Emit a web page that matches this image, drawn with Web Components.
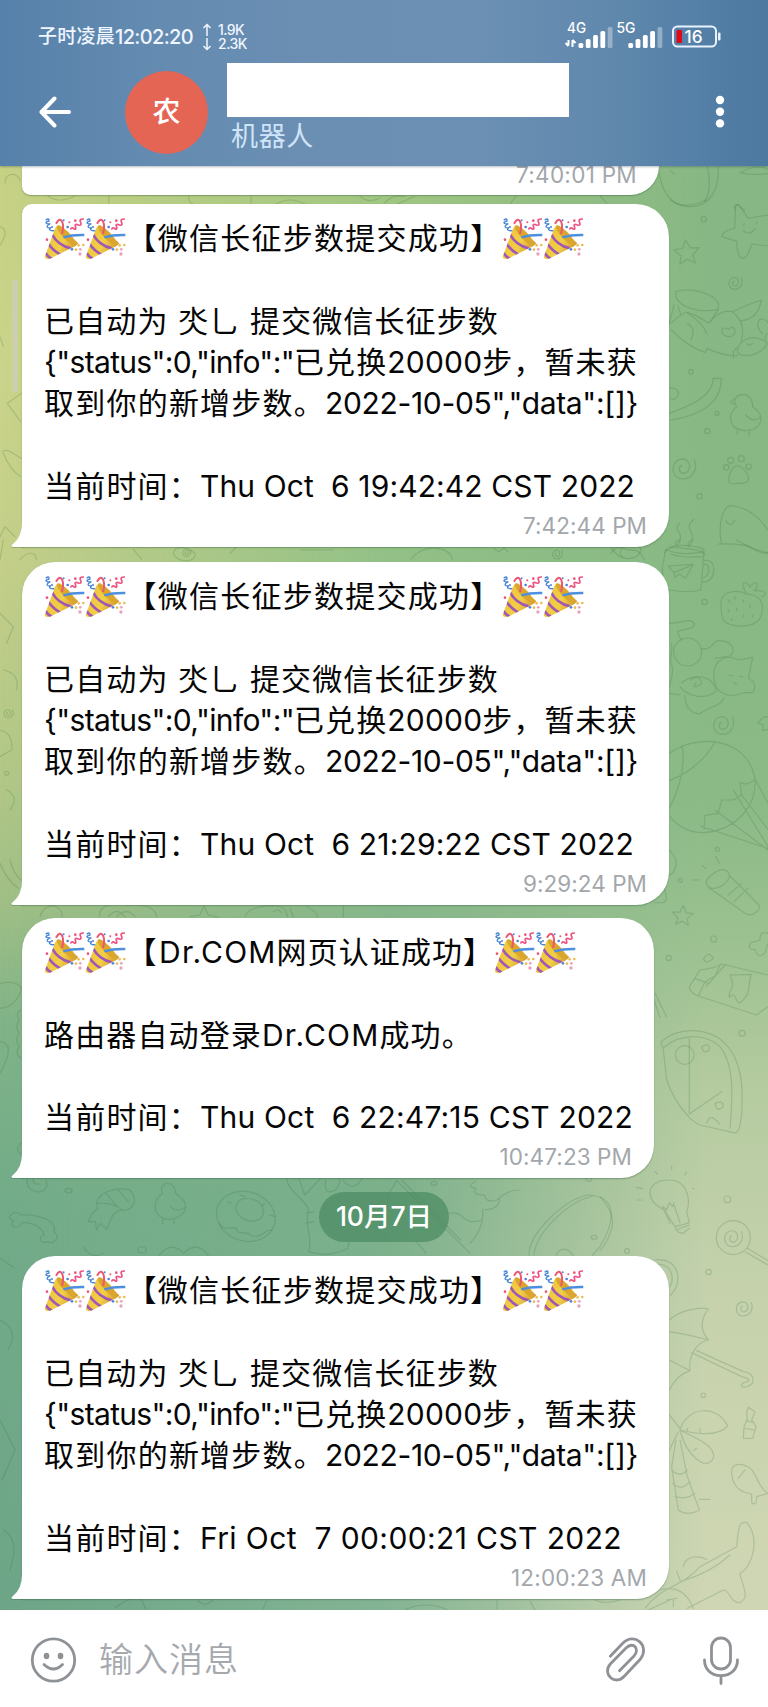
<!DOCTYPE html>
<html lang="zh-CN">
<head>
<meta charset="utf-8">
<title>机器人</title>
<style>
html,body{margin:0;padding:0}
body{width:768px;height:1707px;overflow:hidden;font-family:Inter,"Noto Sans CJK SC",sans-serif;color:#060606}
</style>
</head>
<body>
<chat-screen>
  <chat-header slot="header" initial="农" subtitle="机器人"></chat-header>
  <chat-bubble class="first" w="637" h="29" kind="cut" time="7:40:01 PM" tw="121"></chat-bubble>
  <chat-bubble w="647" h="343" kind="grouped" time="7:42:44 PM" tw="124">
    <chat-line><party-popper></party-popper><party-popper></party-popper><text-run w="375">【微信长征步数提交成功】</text-run><party-popper></party-popper><party-popper></party-popper></chat-line>
    <chat-line></chat-line>
    <chat-line><text-run w="124.6">已自动为</text-run><text-run w="9.6"> </text-run><text-run w="62.2">氼乚</text-run><text-run w="9.6"> </text-run><text-run w="249">提交微信长征步数</text-run></chat-line>
    <chat-line><text-run w="250">{"status":0,"info":"</text-run><text-run w="93.3">已兑换</text-run><text-run w="95">20000</text-run><text-run w="155.5">步，暂未获</text-run></chat-line>
    <chat-line><text-run w="281">取到你的新增步数。</text-run><text-run w="313">2022-10-05","data":[]}</text-run></chat-line>
    <chat-line></chat-line>
    <chat-line><text-run w="156">当前时间：</text-run><text-run w="435">Thu Oct  6 19:42:42 CST 2022</text-run></chat-line>
  </chat-bubble>
  <chat-bubble w="647" h="343" gap="15" time="9:29:24 PM" tw="124">
    <chat-line><party-popper></party-popper><party-popper></party-popper><text-run w="375">【微信长征步数提交成功】</text-run><party-popper></party-popper><party-popper></party-popper></chat-line>
    <chat-line></chat-line>
    <chat-line><text-run w="124.6">已自动为</text-run><text-run w="9.6"> </text-run><text-run w="62.2">氼乚</text-run><text-run w="9.6"> </text-run><text-run w="249">提交微信长征步数</text-run></chat-line>
    <chat-line><text-run w="250">{"status":0,"info":"</text-run><text-run w="93.3">已兑换</text-run><text-run w="95">20000</text-run><text-run w="155.5">步，暂未获</text-run></chat-line>
    <chat-line><text-run w="281">取到你的新增步数。</text-run><text-run w="313">2022-10-05","data":[]}</text-run></chat-line>
    <chat-line></chat-line>
    <chat-line><text-run w="156">当前时间：</text-run><text-run w="434">Thu Oct  6 21:29:22 CST 2022</text-run></chat-line>
  </chat-bubble>
  <chat-bubble w="632" h="260" gap="13" time="10:47:23 PM" tw="132.500">
    <chat-line><party-popper></party-popper><party-popper></party-popper><text-run w="32.5">【</text-run><text-run w="117.5">Dr.COM</text-run><text-run w="217.5">网页认证成功】</text-run><party-popper></party-popper><party-popper></party-popper></chat-line>
    <chat-line></chat-line>
    <chat-line><text-run w="218">路由器自动登录</text-run><text-run w="117.5">Dr.COM</text-run><text-run w="93.3">成功。</text-run></chat-line>
    <chat-line></chat-line>
    <chat-line><text-run w="156">当前时间：</text-run><text-run w="433">Thu Oct  6 22:47:15 CST 2022</text-run></chat-line>
  </chat-bubble>
  <date-pill>10月7日</date-pill>
  <chat-bubble w="647" h="343" gap="14" time="12:00:23 AM" tw="136">
    <chat-line><party-popper></party-popper><party-popper></party-popper><text-run w="375">【微信长征步数提交成功】</text-run><party-popper></party-popper><party-popper></party-popper></chat-line>
    <chat-line></chat-line>
    <chat-line><text-run w="124.6">已自动为</text-run><text-run w="9.6"> </text-run><text-run w="62.2">氼乚</text-run><text-run w="9.6"> </text-run><text-run w="249">提交微信长征步数</text-run></chat-line>
    <chat-line><text-run w="250">{"status":0,"info":"</text-run><text-run w="93.3">已兑换</text-run><text-run w="95">20000</text-run><text-run w="155.5">步，暂未获</text-run></chat-line>
    <chat-line><text-run w="281">取到你的新增步数。</text-run><text-run w="313">2022-10-05","data":[]}</text-run></chat-line>
    <chat-line></chat-line>
    <chat-line><text-run w="156">当前时间：</text-run><text-run w="422">Fri Oct  7 00:00:21 CST 2022</text-run></chat-line>
  </chat-bubble>
  <message-input slot="footer" placeholder="输入消息"></message-input>
</chat-screen>

<script>
const shadow = (el, html) => { el.attachShadow({mode:'open'}).innerHTML = html; return el.shadowRoot; };

customElements.define('chat-line', class extends HTMLElement {
  connectedCallback(){
    if (this.shadowRoot) return;
    shadow(this, `<style>:host{display:flex;align-items:center;height:41.3px;line-height:41.3px;font-size:30px;white-space:pre}</style><slot></slot>`);
  }
});

customElements.define('party-popper', class extends HTMLElement {
  connectedCallback(){
    if (this.shadowRoot) return;
    shadow(this, `<style>:host{display:block;white-space:normal;width:41.3px;height:42px;flex:none}svg{display:block}</style>
    <svg width="41.3" height="42" viewBox="0 0 124 126">
      <defs><linearGradient id="g" x1="0" y1="0.3" x2="1" y2="0.8"><stop offset="0" stop-color="#efc23a"/><stop offset=".5" stop-color="#f2cf45"/><stop offset="1" stop-color="#c98d2c"/></linearGradient>
      <clipPath id="c"><path d="M2 117 33 32Q40 14 62 38 88 60 103 76 98 84 78 92L18 122Q4 126 2 117Z"/></clipPath></defs>
      <path d="M2 117 33 32Q40 14 62 38 88 60 103 76 98 84 78 92L18 122Q4 126 2 117Z" fill="url(#g)"/>
      <ellipse cx="67" cy="52" rx="11" ry="40" transform="rotate(-43 67 52)" fill="#dba62d"/>
      <g clip-path="url(#c)" fill="none" stroke="#a057b8" stroke-width="8"><path d="M24 49Q42 82 80 91"/><path d="M12 76Q27 98 49 110"/><path d="M5 104Q10 116 24 122"/></g>
      <path d="M58 58Q85 50 121 51" fill="none" stroke="#4b8fe0" stroke-width="7"/>
      <path d="M36 17Q48-4 55 12 60 27 54 48" fill="none" stroke="#ed5870" stroke-width="6"/>
      <path d="M5 7Q16-2 15 9C-3 14 10 19 19 17 1 26 12 31 21 29 11 34 20 39 31 38" fill="none" stroke="#4686d5" stroke-width="4"/>
      <path d="M80 35Q82 25 91 33 98 36 94 24 91 16 104 21 115 24 109 11 106 2 120 3" fill="none" stroke="#ee5384" stroke-width="5"/>
      <g fill="#4d83db"><circle cx="59" cy="7" r="3"/><circle cx="71" cy="27" r="4"/><circle cx="24" cy="27" r="3"/><circle cx="84" cy="94" r="4"/></g>
      <g fill="#ed5578"><circle cx="94" cy="8" r="4"/><circle cx="76" cy="13" r="3"/><circle cx="9" cy="65" r="4"/></g>
      <g fill="#eebd52"><circle cx="104" cy="82" r="4"/><circle cx="118" cy="81" r="4"/><circle cx="96" cy="95" r="4"/></g>
      <g fill="#e9a1bd"><circle cx="109" cy="94" r="4"/><circle cx="108" cy="108" r="5"/></g>
    </svg>`);
  }
});

customElements.define('chat-bubble', class extends HTMLElement {
  connectedCallback(){
    if (this.shadowRoot) return;
    const w = this.getAttribute('w'), h = this.getAttribute('h'), kind = this.getAttribute('kind') || '';
    const gap = this.getAttribute('gap') || (kind === 'grouped' ? 9 : 0);
    const cut = kind === 'cut';
    const radius = cut ? '0 0 31px 9px' : (kind === 'grouped' ? '10px' : '33px') + ' 33px 33px 0';
    shadow(this, `<style>
      :host{display:flex;flex-direction:column;position:relative;box-sizing:border-box;width:${w}px;height:${h}px;margin:${gap}px 0 0 22px;
        padding:${cut ? '0' : '14px'} 22px 0;background:#fff;border-radius:${radius};box-shadow:0 1px 1.5px rgba(50,90,60,.42)}
      .tail{position:absolute;left:-11px;bottom:0;display:block;filter:drop-shadow(0 1px 0 rgba(50,90,60,.3));${cut ? 'display:none' : ''}}
      time{align-self:flex-end;white-space:pre;font-size:22.5px;line-height:24px;color:#a3a7ab;margin:${cut ? '-3px 0 0 0' : '6.5px 0 0'}}
    </style>
    <svg class="tail" width="12" height="36"><path d="M11 0H12V36H2Q-1 35 2 33 11 26 11 11Z" fill="#fff"/></svg>
    <slot></slot><time><text-run w="${this.getAttribute('tw')}">${this.getAttribute('time')}</text-run></time>`);
  }
});

customElements.define('date-pill', class extends HTMLElement {
  connectedCallback(){
    if (this.shadowRoot) return;
    shadow(this, `<style>:host{display:flex;align-items:center;justify-content:center;align-self:center;box-sizing:border-box;width:130px;height:50px;padding-bottom:2px;margin-top:14px;border-radius:25px;
      background:rgba(75,139,98,.72);color:#fff;font-size:26.5px;line-height:40px;font-weight:500;white-space:pre}</style><span><slot></slot></span>`);
  }
});

customElements.define('status-bar', class extends HTMLElement {
  connectedCallback(){
    if (this.shadowRoot) return;
    const bars = x => [5,9,13,17,21].map((b,i)=>`<rect x="${x+i*7.3}" y="${22-b}" width="4.8" height="${b}" rx="1.6" fill="#fff" opacity="${i===4?.35:1}"/>`).join('');
    shadow(this, `<style>
      :host{display:flex;align-items:center;height:74px;box-sizing:border-box;padding:0 45px 0 38px;color:#eff6ff;font-weight:500}
      .clock{font-size:19px;line-height:24px;display:flex;font-weight:500}
      .arrows{margin:0 6px 0 9px}
      .net{display:flex;flex-direction:column;font-size:14px;line-height:14px}
      .icons{margin-left:auto}
      svg{display:block}
      text{font-family:Inter,sans-serif}
    </style>
    <span class="clock"><text-run w="77">子时凌晨</text-run><text-run w="78" style="font-size:20px">12:02:20</text-run></span>
    <svg class="arrows" width="10" height="28" viewBox="0 0 10 28" fill="none" stroke="#eff6ff" stroke-width="1.5"><path d="M5 13V2M1.500 5 5 1.500 8.500 5M5 15V26M1.500 23 5 26.500 8.500 23"/></svg>
    <span class="net"><text-run w="26">1.9K</text-run><text-run w="29">2.3K</text-run></span>
    <svg class="icons" width="158" height="30" viewBox="0 0 158 30" overflow="visible">
      <text x="2" y="11" font-size="14" textLength="19" lengthAdjust="spacingAndGlyphs" fill="#fff">4G</text>
      <path d="M3.500 18V23.500M.5 21 3.500 24M7.500 25V18M10.500 21 7.500 18" stroke="#fff" stroke-width="2" fill="none"/>
      <g transform="translate(0 4)">${bars(13.500)}</g>
      <text x="51.500" y="11" font-size="14" textLength="19" lengthAdjust="spacingAndGlyphs" fill="#fff">5G</text>
      <g transform="translate(0 4)">${bars(63.300)}</g>
      <rect x="108" y="4.500" width="43" height="20" rx="4.500" fill="none" stroke="#e9f3ff" stroke-width="2"/>
      <rect x="153" y="10.500" width="2.500" height="8" rx="1" fill="#e9f3ff"/>
      <rect x="111.500" y="8" width="5.500" height="13" rx="1" fill="#de0917"/>
      <text x="119.500" y="20.500" font-size="17" textLength="18" lengthAdjust="spacingAndGlyphs" fill="#fff">16</text>
    </svg>`);
  }
});

customElements.define('chat-header', class extends HTMLElement {
  connectedCallback(){
    if (this.shadowRoot) return;
    shadow(this, `<style>
      :host{display:block;height:166px;background:linear-gradient(90deg,#5681aa 0,#638ab0 18%,#6b8fb3 40%,#6b90b3 62%,#6088ad 80%,#517da5 94%,#4d79a1);box-shadow:0 1px 2px rgba(40,60,80,.35)}
      .row{display:flex;height:92px;margin-top:-11px;padding:0 0 0 38px;align-items:flex-start}
      .back{margin:33px 52px 0 1px}
      .avatar{width:83px;height:83px;margin-top:8px;border-radius:50%;background:#e56555;color:#fff;display:flex;align-items:center;justify-content:center;font-size:28px;font-weight:500;line-height:36px;box-sizing:border-box;padding-bottom:1px}
      .names{margin-left:19px;width:342px}
      .name{height:54px;background:#fff}
      .sub{font-size:27px;line-height:40px;color:#cfe4f8;margin:0 0 0 4px;white-space:pre}
      .more{margin:32px 0 0 146px}
      svg{display:block}
    </style>
    <status-bar></status-bar>
    <div class="row">
      <svg class="back" width="34" height="34" fill="none" stroke="#fff" stroke-width="4" stroke-linecap="round" stroke-linejoin="round"><path d="M30 16H3M15.500 2.500 2.500 16 15.500 29.500"/></svg>
      <div class="avatar">${this.getAttribute('initial')}</div>
      <div class="names"><div class="name"></div><div class="sub"><text-run w="83">${this.getAttribute('subtitle')}</text-run></div></div>
      <svg class="more" width="12" height="34" fill="#fff"><circle cx="5" cy="5" r="4.200"/><circle cx="5" cy="16.700" r="4.200"/><circle cx="5" cy="28.400" r="4.200"/></svg>
    </div>`);
  }
});

customElements.define('message-input', class extends HTMLElement {
  connectedCallback(){
    if (this.shadowRoot) return;
    shadow(this, `<style>
      :host{display:flex;align-items:flex-start;box-sizing:border-box;height:97px;padding:26px 31px 0 30px;background:#fff}
      svg{display:block;fill:none;stroke:#8e9296;stroke-width:2.8;stroke-linecap:round;stroke-linejoin:round}
      .ph{margin:0 auto 0 21px;font-size:34px;font-weight:350;line-height:48px;color:#a5a9ae;white-space:pre}
      .clip{margin-right:52px}
    </style>
    <svg width="48" height="48"><circle cx="23.500" cy="24" r="21.200"/><path d="M14 28.500Q23.500 37.500 32.500 28.500"/><g fill="#8e9296" stroke="none"><ellipse cx="16.500" cy="20" rx="2.800" ry="3.200"/><ellipse cx="30.500" cy="20" rx="2.800" ry="3.200"/></g></svg>
    <span class="ph"><text-run w="140">${this.getAttribute('placeholder')}</text-run></span>
    <svg class="clip" width="44" height="48" viewBox="0 0 44 48"><path d="M5.300 20.300 17.500 7.500C29-4.500 45.500 9.500 35.500 23L19.500 40C10.500 50.500-3.500 38 5.300 28L21 12C29 4.500 35 14 29 20L14.500 34.800"/></svg>
    <svg width="36" height="50" overflow="visible"><rect x="10.500" y="2" width="19" height="31" rx="9.500"/><path d="M3.500 24C3.500 33 10 39.700 20 39.700S36.500 33 36.500 24M20 40V47.500" /></svg>`);
  }
});

customElements.define('chat-wallpaper', class extends HTMLElement {
  connectedCallback(){
    if (this.shadowRoot) return;
    const star = (x,y,r,a=0) => `<path transform="translate(${x} ${y}) rotate(${a}) scale(${r})" d="M0-1 .3-.35 1-.3 .45.2 .6.85 0 .5-.6.85-.45.2-1-.3-.3-.35Z"/>`;
    const spiral = (x,y,r) => `<path transform="translate(${x} ${y}) scale(${r})" d="M.9-.7C1.300.3.6 1-.1 1-.8 1-1.100.3-.9-.2-.7-.8 0-.9.3-.6.7-.1.4.5-.1.5-.5.4-.5-.1-.2-.2"/>`;
    const dot = (x,y,r=3) => `<circle cx="${x}" cy="${y}" r="${r}"/>`;
    const duck = (x,y) => `<path transform="translate(${x} ${y})" d="M-5-7C-12-20 7-26 8-10 20-3 18 15 1 16-16 16-17 1-5-7M-10-11H-15L-10-8M2 4Q8 9 15 2M-5 16V22M7 16V22"/>`;
    shadow(this, `<style>
      :host,.l{position:absolute;inset:0;display:block}
      .a{background:linear-gradient(#c6d184 10%,#cbd48a 21%,#c4cf89 33%,#b1c787 46%,#a0bf86 53%,#80b388 60%,#73ac89 70%,#6da588 94%)}
      .b{background:linear-gradient(#a0c682 12%,#93c187 32%,#86b68a 53%,#7bb08b 70%,#83b493 94%);-webkit-mask:linear-gradient(90deg,transparent,#000 50%);mask:linear-gradient(90deg,transparent,#000 50%)}
      .c{background:linear-gradient(#87b784 10%,#88b884 32%,#8bba87 47%,#9cc191 55%,#b5cba0 64%,#c3d1ab 74%,#cad4af 83%,#cfd6b3 94%);-webkit-mask:linear-gradient(90deg,transparent 50%,#000 92%);mask:linear-gradient(90deg,transparent 50%,#000 92%)}
      svg{fill:none;stroke:rgba(45,105,62,.2);stroke-width:1.2;stroke-linecap:round;stroke-linejoin:round}
      path,circle,ellipse,rect{vector-effect:non-scaling-stroke}
    </style>
    <div class="l a"></div><div class="l b"></div><div class="l c"></div>
    <svg class="l" width="768" height="1707" viewBox="0 0 768 1707">
      <!-- upper right -->
      <g transform="translate(384 0) scale(.33333)"><path d="M822 500C830 560 850 620 920 620 985 618 1005 560 1003 500M970 500C982 550 975 590 957 612M860 512 870 523M1068 518Q1120 490 1152 508M1068 518Q1110 528 1152 520M1052 630Q1050 610 1064 616L1082 632M0 610Q30 580 60 590M40 612 90 590M380 610 396 588M650 588 668 610"/></g>
      <g transform="translate(384 200) scale(.33333)">
        <path d="M1055 16Q1062 10 1070 22L1092 55 1152 45M1055 16 1052 84Q1008 98 1014 110L1058 124Q1060 180 1080 175 1092 170 1103 132L1152 138M1080 70V76M1118 66V72M1078 92Q1100 110 1112 86M860 0Q900 32 965 0"/>
        ${star(908,158,39,-5)}${spiral(1054,248,20)}${dot(959,58,8)}
        <path d="M875 275C920 260 990 280 1003 310V328C950 340 890 325 875 290ZM870 315 856 370M882 318 890 342M1003 328 975 370Q920 335 906 337 880 350 862 370M906 337Q960 370 968 402M975 370Q1010 325 1045 335 1090 370 1070 430M1045 335Q1085 315 1133 300 1120 360 1070 362M862 390Q910 440 965 458L968 445Q1030 472 1060 466M910 370Q940 390 920 420M1044 408C1010 420 1000 370 1034 388 1050 370 1062 400 1044 408M1060 455C1060 420 1110 395 1150 430 1130 470 1070 476 1060 455M1135 402C1105 370 1130 340 1152 368M1048 475V455L1062 440M1150 400Q1140 410 1145 425M1088 432Q1098 440 1105 430"/>
        ${dot(921,515,7)}${dot(999,640,6)}${dot(970,693,8)}${dot(947,889,8)}
        <path d="M856 640C910 620 990 590 987 535H1012C1012 620 930 650 860 660M858 565C900 560 880 610 860 595"/>
        <path d="M1058 620C1030 585 1105 560 1106 620 1150 650 1130 690 1085 692 1030 690 1030 640 1058 620M1052 596 1040 606 1052 614M1085 645Q1110 672 1130 650M1060 688V702M1096 692V706"/>
        ${spiral(900,803,34)}
        <path d="M1062 798C1045 790 1020 850 1045 852 1060 845 1080 858 1092 842 1100 825 1075 800 1062 798"/>
        ${dot(1027,802,8)}${dot(1040,781,9)}${dot(1072,776,9)}${dot(1094,800,8)}
        <path d="M1012 1030C1000 960 1020 910 1050 918 1100 925 1130 960 1152 990M1002 1032Q1070 1030 1095 1040 1130 1062 1152 1060M1025 962Q1040 985 1052 962"/>
        <path d="M842 1058Q850 1035 900 1045 960 1050 962 1065M860 1062Q900 1075 955 1070M880 1035C910 1000 860 990 888 970M915 1038C950 1000 890 990 930 958M80 1078Q110 1040 160 1045 200 1050 205 1078M330 1046 345 1055 360 1045 372 1055M680 1060Q700 1030 730 1050 770 1045 780 1078"/>
        ${spiral(520,1062,15)}
      </g>
      <!-- middle right -->
      <g transform="translate(600 540) scale(.33333)">
        <path d="M208 22C240 10 315 20 312 32L303 150Q270 160 208 150 190 145 187 80L198 28Q240 50 312 35M312 62C355 50 350 135 305 125M309 74C335 65 330 115 306 113M205 78 280 73 257 115 238 103 225 112 222 97ZM280 73 225 97M230 18Q220 5 240 0M265 20Q260 8 275 0M32 20Q60 70 110 50 130 30 118 22M65 25Q55 48 72 52M410 0Q460 30 504 38"/>
        <path d="M364 180C370 150 420 150 440 162 490 165 495 200 480 235 460 265 390 265 370 240 362 220 362 200 364 180M440 162C415 120 440 120 450 142 470 110 480 140 462 152 500 150 505 165 485 170M385 180 390 188M405 170V178M430 180V186M450 195V203M385 210V216M410 205V211M430 225V231M458 225V231M395 235V241"/>
        ${dot(314,186,8)}
        <circle cx="263" cy="336" r="42"/><path d="M208 250C250 250 270 230 284 252 285 270 230 270 232 275L243 300M306 326C340 330 340 300 355 302 395 300 410 330 390 348L345 355M215 310C220 340 205 350 215 375 225 400 208 420 210 440M362 360C380 345 405 355 415 360L458 352 445 415Q475 430 458 458L430 458C395 475 355 465 345 430 338 400 340 375 362 360M388 406 398 408M420 410H428M400 428 410 433M245 428C290 395 340 410 350 455M240 440C260 470 320 480 345 455M208 460 240 465M255 465C255 510 285 525 300 520 330 500 360 500 372 475M272 420Q300 400 305 432 270 450 288 428"/>
        ${spiral(370,553,30)}<path d="M504 530 490 532 474 548 490 555 488 572 504 568"/>
        <path d="M208 640C290 580 440 590 464 712 475 790 415 870 310 878 270 878 235 860 210 830M345 606Q300 685 208 722M247 616Q260 700 210 802M420 727Q440 740 464 718M420 727 425 765 400 780 365 780 355 820 315 826 312 868M425 765 504 868M400 750 504 920M345 810 504 930M300 858 504 925M464 715 504 790"/>
        ${dot(352,928,6)}${dot(241,1021,6)}${star(248,1128,31,4)}
        <path d="M308 976 317 986M347 950 358 970M277 1020H298M318 1030C320 1010 360 980 380 992 410 1015 350 1060 325 1040L318 1030M325 1042 435 1120C460 1135 485 1105 477 1095L390 1008M425 1030 385 1065M443 1045 402 1085M160 1035Q180 1040 195 1010 230 1005 228 960 210 920 185 925 175 935 165 925M165 1088H190Q210 1080 185 1030M160 970 155 972M34 955V985"/>
        <path d="M504 1180Q480 1170 480 1200L452 1208Q440 1230 465 1228 475 1260 495 1238L504 1210M268 1340 300 1290 345 1282 365 1272 504 1305M268 1340Q270 1360 295 1368L470 1425 504 1400M295 1368 315 1325 345 1308 360 1275M318 1340 375 1275M283 1315 325 1330M390 1305 455 1303C440 1330 460 1360 418 1390 400 1380 410 1350 388 1372 382 1350 410 1350 390 1305M310 1258Q325 1230 340 1255 320 1275 310 1258"/>
        ${dot(341,1197,9)}${dot(206,1254,8)}${dot(426,1480,9)}
        <path d="M165 1360 200 1430M162 1380 180 1432"/>
        <!-- pizza slice -->
        <path d="M183 1505C240 1455 330 1465 375 1510 425 1560 430 1640 425 1720 420 1780 410 1780 400 1778L300 1755Q270 1740 262 1725 220 1680 200 1620L190 1530ZM192 1522C250 1475 325 1485 360 1520 400 1570 400 1650 390 1765M268 1496V1722M268 1722 365 1655M305 1520Q330 1505 328 1530 310 1545 305 1520M345 1690Q372 1680 370 1700 350 1720 345 1690M320 1750Q330 1715 358 1752"/><circle cx="254" cy="1545" r="28"/>
      </g>
      <!-- bulb, lollipop, umbrella, palm, crocodile -->
      <g transform="translate(600 1130) scale(.33333)">
        <path d="M190 238C130 210 140 150 205 150 270 150 270 220 260 245L268 278Q250 285 225 290ZM225 290Q230 310 250 310L268 295M228 300 268 285M190 235 225 290M188 230 210 280M222 225 240 278M190 230 200 240 208 218 218 230 222 218M110 172 128 176M112 210H125M165 125 172 132M260 125 255 135M278 176H282M215 108V118"/>
        <circle cx="400" cy="323" r="51"/>${spiral(400,323,27)}<path d="M442 355 504 392M438 367 504 405"/>
        ${dot(382,208,10)}${dot(326,426,8)}${dot(310,796,7)}${dot(81,363,7)}${spiral(432,534,24)}
        <path d="M165 390C240 380 250 460 212 495M175 402C220 405 222 450 210 470M0 200Q55 260 30 310 20 340 0 362"/>
        <path d="M208 570C240 540 300 530 325 537 300 570 300 600 325 630 280 640 265 690 270 722L208 690M208 605Q250 610 325 630M270 722Q230 735 208 780M275 668 425 740Q460 750 440 755 420 760 425 770 445 775 458 758 465 730 430 725L290 662"/>
        <path d="M445 832 465 845 455 870 468 890 458 925 430 925 432 890 442 870 440 845ZM438 872 462 878M434 895 462 900"/>
        <path d="M240 900C260 830 350 820 383 888 350 925 280 910 240 900 290 925 350 950 340 985 320 1025 260 980 240 900M208 855 240 895M235 905 208 960M228 930 215 1010 235 1140Q260 1160 298 1140L262 1040 240 930M215 1020Q240 1045 262 1020M218 1060Q245 1085 270 1055M225 1100Q260 1110 285 1090M298 1108H330M262 905V895M300 908V895M290 955 280 962"/>
        <path d="M395 1025C395 995 430 1000 450 1015 475 1035 470 1070 504 1090L470 1100Q470 1130 455 1118L455 1092C410 1085 395 1060 395 1025M415 1045 435 1020"/>
        <path d="M135 1435C180 1370 250 1370 300 1310L410 1250C415 1200 415 1170 440 1178 480 1220 460 1310 420 1330 430 1380 450 1400 420 1418 390 1420 390 1380 370 1380L262 1435M250 1310C260 1270 300 1280 320 1288M240 1355Q330 1330 390 1275M230 1325 240 1350M200 1410 230 1405M220 1410V1430M180 1380Q250 1360 280 1435"/>
      </g>
      <!-- strip around the date -->
      <g transform="translate(0 1160) scale(.4898 .33333)">
        <path d="M22 165C30 150 42 160 42 165 85 160 120 190 110 215 125 230 110 255 95 245 85 255 75 230 90 225 85 200 65 185 45 188 35 215 15 195 28 182 20 182 18 170 22 165M55 55Q55 100 85 95 100 85 94 60M68 55Q65 75 82 72M197 130C200 95 240 80 265 90 285 120 270 155 250 150 225 155 225 190 218 208L205 190 197 210 195 185 180 185Q190 150 200 145ZM197 130Q230 125 250 150M215 98 240 140M240 88 262 125"/>
        ${dot(140,92,7)}${dot(290,270,9)}
        <path d="M332 100C320 65 358 55 358 100 400 140 370 180 340 178 305 165 315 115 332 100M348 140Q360 160 380 140M332 178V190M355 178V190"/>
        <ellipse cx="502" cy="169" rx="59" ry="76" transform="rotate(-12 502 169)"/><ellipse cx="510" cy="149" rx="27" ry="35" transform="rotate(-20 510 149)"/>
        <path d="M448 190C460 220 470 195 482 205 485 230 505 210 510 225 535 240 535 210 555 210M465 125 472 130M490 105 500 110M540 130 535 138M550 165 562 170M170 262Q190 300 210 280M325 285Q350 240 375 280 400 240 425 285M0 295 30 325M585 55C590 100 620 110 630 150 620 200 640 230 630 275 660 290 690 280 710 265L715 235M610 55 622 105 655 55M665 60Q660 110 685 90 700 60 690 55M700 60Q720 100 740 55M625 160 640 155M625 190 640 185M790 110 810 62 850 120 960 280M820 60 940 240M870 280 850 245M970 65Q950 80 972 85 960 105 990 105 990 130 1015 120 1035 90 1060 90M918 160C950 150 940 200 985 180M960 250Q990 200 985 150 1020 150 1020 115"/>
        <path d="M1080 285C1080 220 1150 120 1200 105 1270 110 1250 200 1225 260L1210 285M1090 285C1095 215 1160 125 1210 108M1135 285Q1150 250 1170 285"/>${dot(1213,232,6)}${dot(886,70,6)}${dot(1202,58,6)}
      </g>
      <!-- left margin and gaps between bubbles -->
      <g transform="translate(0 860) scale(.33333)"><path d="M0 10Q20 60 55 85M30 0Q40 40 62 60M0 370Q50 360 65 385 50 440 0 445M62 450Q45 460 58 480 42 500 58 520 42 540 58 560 42 580 62 595M0 545Q50 550 0 640M65 850Q40 865 65 885M120 170Q130 135 165 138 190 150 185 170M300 170C290 135 350 125 385 135 440 130 470 150 470 170M325 170Q350 140 375 170M350 170Q380 140 405 170M570 170 600 165 612 138 625 165 655 172M735 170Q750 135 830 138 860 140 862 170M870 145 880 172M920 140Q960 160 950 172M1030 138V172M820 155Q835 145 845 158"/></g>
      <g transform="translate(0 200) scale(.33333)"><path d="M0 80Q30 90 0 135M0 410 10 440M65 580 22 610 62 665M8 755C20 740 50 770 65 775M8 755Q30 810 62 830M0 1010 15 980 45 1010M0 1080 10 1020M60 1078Q100 1040 110 1078M520 1060C525 1035 560 1040 585 1060 590 1090 530 1090 520 1060M425 1078 400 1048M690 1060 710 1040M900 1050 1000 1050"/>${spiral(560,1058,12)}</g>
      <g transform="translate(0 530) scale(.33333)"><path d="M0 250 40 290 20 340M10 420Q60 430 50 480M0 600Q40 610 35 660L0 680M20 780Q60 800 30 840"/>${spiral(25,550,14)}${dot(20,730,6)}</g>
      <path d="M48 196Q58 204 75 196M109 196V204M189 196Q188 202 193 204M251 196V204M276 204Q290 196 305 204M360 196Q368 204 380 198M0 1320Q20 1330 8 1350M0 1420 15 1450 2 1480M4 1530Q20 1540 10 1570M115 1608Q130 1595 142 1600L146 1610M198 1601Q205 1608 213 1600M262 1610 267 1601M405 1610Q425 1600 448 1610M497 1601V1609M530 1601 535 1610M595 1600Q605 1605 620 1600M648 1610 670 1600M5 183A4 4 0 1 1 20 181"/>
      <rect x="12" y="280" width="6" height="112" rx="3" fill="rgba(205,205,185,.75)" stroke="none"/>
    </svg>`);
  }
});

customElements.define('chat-screen', class extends HTMLElement {
  connectedCallback(){
    if (this.shadowRoot) return;
    shadow(this, `<style>
      :host{display:flex;flex-direction:column;position:relative;width:768px;height:1707px;overflow:hidden;isolation:isolate}
      chat-wallpaper{position:absolute;inset:0;z-index:-1}
      .head{position:relative;z-index:2}
      .messages{flex:1;display:flex;flex-direction:column;align-items:flex-start}
    </style>
    <chat-wallpaper></chat-wallpaper>
    <div class="head"><slot name="header"></slot></div>
    <div class="messages"><slot></slot></div>
    <slot name="footer"></slot>`);
  }
});

/* A run of text whose letter-spacing is adjusted so that it fills the given advance width.
   Defined last: it measures itself with the font size that its hosts have set. */
customElements.define('text-run', class extends HTMLElement {
  connectedCallback(){
    if (this.shadowRoot) return;
    const w = +this.getAttribute('w');
    const r = shadow(this, `<style>:host{display:inline-block;white-space:pre;width:${w}px}span{display:inline-block}</style><span><slot></slot></span>`);
    const s = r.querySelector('span'), n = [...this.textContent].length;
    s.style.letterSpacing = ((w - s.getBoundingClientRect().width) / n).toFixed(3) + 'px';
  }
});
</script>
</body>
</html>
